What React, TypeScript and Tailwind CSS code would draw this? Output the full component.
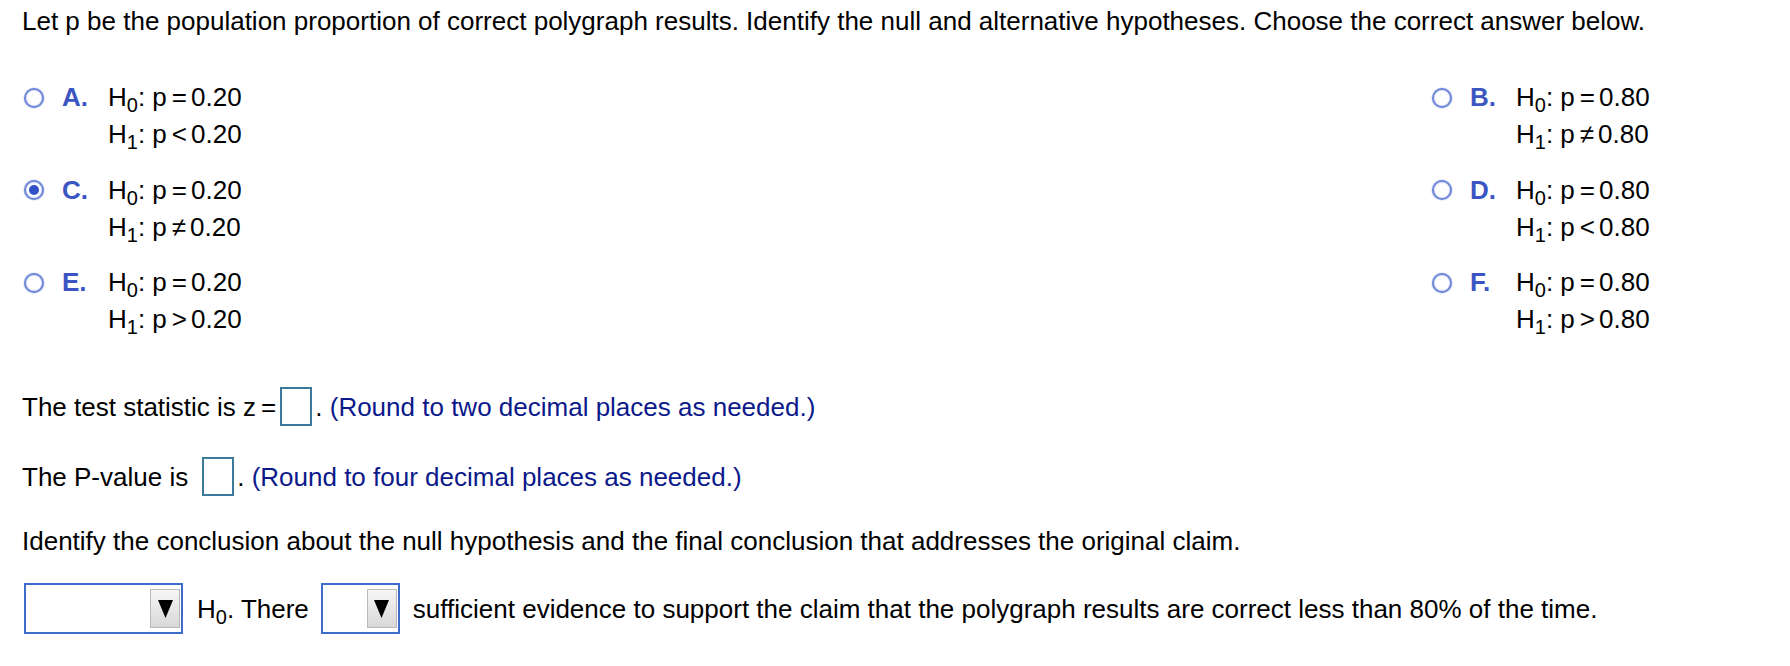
import React from "react";

const H = ({ n }: { n: string }) => (
  <span>
    H<sub className="-bottom-[6px] text-[20px]">{n}</sub>
  </span>
);

const Rel = ({ s }: { s: string }) => <span className="ml-[5px] mr-[4px]">{s}</span>;

const Radio = ({ checked }: { checked?: boolean }) => (
  <span className="flex h-[20px] w-[20px] shrink-0 items-center justify-center rounded-full border-[2px] border-[#7089d8] bg-white shadow-[0_0_1.5px_#8ea2e2,inset_0_0_1.5px_#8ea2e2]">
    {checked ? <span className="h-[10px] w-[10px] rounded-full bg-[#3152c6]" /> : null}
  </span>
);

type Opt = { letter: string; h0: string; rel: string; h1: string; checked?: boolean };

const Option = ({ o }: { o: Opt }) => (
  <div className="flex items-start">
    <div className="flex h-[37px] items-center">
      <Radio checked={o.checked} />
    </div>
    <div className="ml-[18px] w-[46px] shrink-0 font-bold leading-[37px] text-[#3b55c3]">{o.letter}.</div>
    <div className="leading-[37px] whitespace-nowrap">
      <div>
        <H n="0" />: p<Rel s="=" />{o.h0}
      </div>
      <div>
        <H n="1" />: p<Rel s={o.rel} />{o.h1}
      </div>
    </div>
  </div>
);

const Box = () => <span className="inline-block h-[39px] w-[32px] shrink-0 border-[2px] border-[#3b7a98] bg-white align-middle" />;

const Select = ({ w }: { w: string }) => (
  <div className={`flex h-[51px] ${w} shrink-0 items-start justify-end border-[2px] border-[#3d6ccd] bg-white pr-[1px] pt-[4px]`}>
    <div className="flex h-[39px] w-[30px] items-center justify-center border border-[#b9b9b9] bg-gradient-to-b from-[#f6f6f6] to-[#d8d8d8]">
      <svg width="17" height="20" viewBox="0 0 17 20">
        <polygon points="1,1 16,1 8.5,19" fill="#000" />
      </svg>
    </div>
  </div>
);

export default function App() {
  const left: Opt[] = [
    { letter: "A", h0: "0.20", rel: "<", h1: "0.20" },
    { letter: "C", h0: "0.20", rel: "≠", h1: "0.20", checked: true },
    { letter: "E", h0: "0.20", rel: ">", h1: "0.20" },
  ];
  const right: Opt[] = [
    { letter: "B", h0: "0.80", rel: "≠", h1: "0.80" },
    { letter: "D", h0: "0.80", rel: "<", h1: "0.80" },
    { letter: "F", h0: "0.80", rel: ">", h1: "0.80" },
  ];
  return (
    <div className="h-[666px] w-[1790px] overflow-hidden bg-white pl-[22px] pt-[6px] text-[26px] text-black" style={{ fontFamily: '"Liberation Sans", Arial, sans-serif' }}>
      <div className="leading-[30px] whitespace-nowrap">
        Let p be the population proportion of correct polygraph results. Identify the null and alternative hypotheses. Choose the correct answer below.
      </div>
      <div className="mt-[43px] grid grid-cols-[1408px_auto] pl-[2px]">
        <div className="flex flex-col gap-[18.5px]">
          {left.map((o) => (
            <Option key={o.letter} o={o} />
          ))}
        </div>
        <div className="flex flex-col gap-[18.5px]">
          {right.map((o) => (
            <Option key={o.letter} o={o} />
          ))}
        </div>
      </div>
      <div className="mt-[49px] flex h-[39px] items-center whitespace-pre leading-[30px]">
        <span>The test statistic is z</span>
        <span className="ml-[5px]">=</span>
        <span className="ml-[4px] flex"><Box /></span>
        <span className="ml-[3px]">.</span>
        <span className="text-[#0b198a]"> (Round to two decimal places as needed.)</span>
      </div>
      <div className="mt-[31px] flex h-[39px] items-center whitespace-pre leading-[30px]">
        <span>The P-value is</span>
        <span className="ml-[14px] flex"><Box /></span>
        <span className="ml-[3px]">.</span>
        <span className="text-[#0b198a]"> (Round to four decimal places as needed.)</span>
      </div>
      <div className="mt-[30px] leading-[30px] whitespace-nowrap">
        Identify the conclusion about the null hypothesis and the final conclusion that addresses the original claim.
      </div>
      <div className="ml-[2px] mt-[27px] flex h-[51px] items-center whitespace-nowrap leading-[30px]">
        <Select w="w-[159px]" />
        <span className="ml-[14px]">
          <H n="0" />. There
        </span>
        <span className="ml-[12px]">
          <Select w="w-[79px]" />
        </span>
        <span className="ml-[13px]">sufficient evidence to support the claim that the polygraph results are correct less than 80% of the time.</span>
      </div>
    </div>
  );
}
